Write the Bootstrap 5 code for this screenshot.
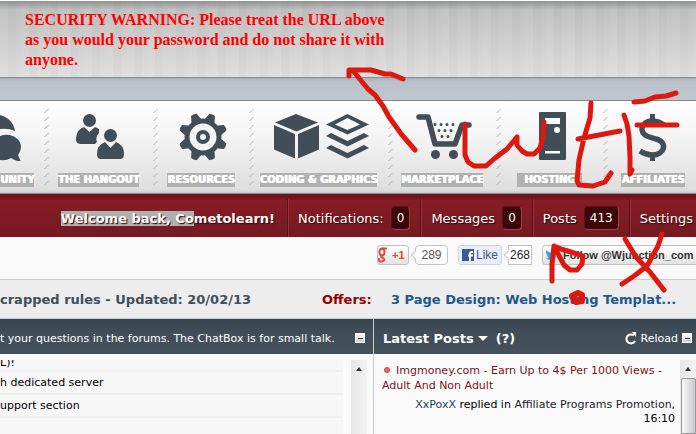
<!DOCTYPE html>
<html lang="en">
<head>
<meta charset="utf-8">
<meta name="viewport" content="width=device-width, initial-scale=1">
<title>Wjunction</title>
<link href="https://cdn.jsdelivr.net/npm/bootstrap@5.3.0/dist/css/bootstrap.min.css" rel="stylesheet">
<style>
body{font-family:"DejaVu Sans",Verdana,sans-serif;font-size:11px;line-height:15px;background:#fafafa;color:#000;overflow:hidden}
a{text-decoration:none;color:inherit}
.top-banner{border-top:1px solid #fff;border-bottom:1px solid #838d93;height:78px;padding:9px 25px;
 background:linear-gradient(rgba(110,114,114,.55),rgba(110,114,114,0) 9px),repeating-linear-gradient(90deg,rgba(255,255,255,.06) 0 8px,rgba(0,0,0,.01) 8px 16px,rgba(255,255,255,.03) 16px 21px),linear-gradient(#bbb,#dedede)}
.warn{font:bold 16px/20px "Liberation Serif","Times New Roman",serif;color:#f00;max-width:370px}
.blue-strip{height:23px;background:linear-gradient(#a9b2b9,#bac2ca 4px,#bfc6cd);border-bottom:1px solid #7b878f}
.icon-nav{display:grid;grid-template-columns:44px 109px 96px 139px 108px 107px minmax(100px,1fr);background:linear-gradient(#fff,#f4f4f4 40%,#dedede 96%,#cfcfcf);border-bottom:1px solid #838a8d;height:93px}
.nav-cell{display:flex;flex-direction:column;align-items:center;padding-top:10px;position:relative}
.nav-cell:first-child{align-items:flex-start}
.nav-cell:last-child{width:100px}
.slashes{position:absolute;left:0;top:8px}
.pic{height:50px;fill:#414d57}
.tag{margin-top:12px;height:14px;font-weight:bold;font-size:10px;line-height:14px;background:#b0b0b0;color:#fff;white-space:nowrap;text-shadow:1px 0 0 #fff}
.tag-wide{padding:0 7px}
.user-bar{height:43px;font-size:13px;color:#fff;text-shadow:1px 1px 1px #300;background:linear-gradient(#70131a 0 4px,#871c25 6px,#741a21);padding-top:5px;white-space:nowrap;overflow:hidden}
.user-bar>*{flex-shrink:0}
.welcome{width:287px;padding-right:12px}
.welcome mark{background:#b0b0b0;color:inherit;padding:0}
.bar-item{border-left:1px solid #5e1118;box-shadow:inset 1px 0 #962f37;padding:0 10px;gap:7px}
.count{background:#3d0609;border:1px solid #5e1016;border-right-color:#a0444b;border-bottom-color:#a0444b;border-radius:4px;min-width:19px;height:24px;padding:0 5px;line-height:22px;font-size:12px;text-align:center}
.share{height:42px;padding:8px 0 0 377px;white-space:nowrap;overflow:hidden;font-family:"Liberation Sans",Arial,sans-serif}
.share>*{flex-shrink:0}
.share button{height:20px;border:1px solid #c2c2c2;border-radius:3px;background:linear-gradient(#fff,#e2e2e2);padding:0}
.share .plus{width:32px;color:#dd4b39;font-weight:bold;font-size:11px;gap:4px}
.share .like{width:44px;background:#eceef5;border-color:#cad4e7;color:#3b5998;font-size:12px;gap:2px}
.bubble{height:20px;border:1px solid #c4c4c4;background:#fff;font-size:12px;line-height:18px;text-align:center;position:relative;color:#555;margin:0 10px 0 6px}
.bubble::before{content:"";position:absolute;left:-4px;top:6px;width:6px;height:6px;background:#fff;border:1px solid #c4c4c4;border-width:0 0 1px 1px;transform:rotate(45deg)}
.bubble-plus{width:33px}
.bubble-like{width:24px}
.share .follow{width:180px;font-weight:bold;font-size:11px;color:#333;gap:5px;padding-left:3px}
.news{height:40px;border-top:1px solid #ccc;border-bottom:1px solid #ccc;background:#ededed;font-weight:bold;font-size:13px;white-space:nowrap;overflow:hidden;color:#414f5d}
.news>*{flex-shrink:0}
.news-item{width:322px}
.offers{width:69px;color:#900}
.news a{color:#22588a}
.panels{display:grid;grid-template-columns:373px minmax(0,1fr);height:115px}
.pane-head{height:35px;background:linear-gradient(#38444d,#414e58 40%,#44515b);color:#fff;white-space:nowrap;overflow:hidden;padding-top:3px}
.pane-right{border-left:1px solid #ccc}
.pane-right .pane-head{padding-left:9px}
.post-title{font-size:13px}
.mini{width:10px;height:10px;flex-shrink:0;border:1px solid #fff;background:linear-gradient(#fff,#ccc);padding:0;display:flex;align-items:center;justify-content:center}
.mini::before{content:"";width:5px;height:1px;background:#333}
.chat-rows{width:343px;background:#f7f7f7;margin-top:6px;height:74px;overflow:hidden}
.chat-rows li{height:23px;border-bottom:2px solid #eee;line-height:22px;white-space:nowrap}
.chat-rows li:first-child{height:12px;display:flex;align-items:flex-end;overflow:hidden;line-height:15px}
.chat-rows li:last-child{border:0}
.rail{width:16px;margin-top:6px;height:74px;background:linear-gradient(90deg,#e6e6e6,#f2f2f2);display:flex;flex-direction:column;align-items:center}
.rail svg{margin-top:7px}
.thumb{width:15px;flex:1;margin-top:7px;border:1px solid #999;border-radius:2px 2px 0 0;background:linear-gradient(90deg,#fafafa,#c8c8cc)}
.post{padding:9px 5px 0 8px;width:308px}
.post .subj{color:#7b1320;white-space:nowrap}
.dot{display:inline-block;width:6px;height:6px;border-radius:50%;background:#e66;border:1px solid #e33;margin:0 6px 3px 2px;vertical-align:middle}
.post .meta{line-height:14px;text-align:right;margin-top:5px;padding-bottom:10px;border-bottom:1px solid #ccc;white-space:nowrap}
.who{color:#1f4063}
.ink{position:absolute;left:0;top:0;pointer-events:none;fill:none;stroke:#dd190f;stroke-width:5;stroke-linecap:round;stroke-linejoin:round}
</style>
<script src="https://cdn.jsdelivr.net/npm/bootstrap@5.3.0/dist/js/bootstrap.bundle.min.js"></script>
</head>
<body class="position-relative">
<header>
<div class="top-banner"><p class="warn mb-0">SECURITY WARNING: Please treat the URL above as you would your password and do not share it with anyone.</p></div>
<div class="blue-strip"></div>
<svg width="0" height="0" class="position-absolute"><defs>
<pattern id="hatch" width="6" height="8" patternUnits="userSpaceOnUse"><path d="M.5 4L4.500 0" stroke="#b2b2b2" fill="none"/></pattern></defs></svg>
<nav class="icon-nav">
<a href="#" class="nav-cell"><svg class="pic" width="24" viewBox="0 111 24 50"><path d="M0 115C8 117 14 123 15 131Q8 128 0 129zM0 136C10 132 21 138 21 147Q21 151 18 155L21 162Q16 161 11 158Q6 161 0 160z"/></svg><span class="tag">UNITY</span></a>
<a href="#" class="nav-cell"><svg class="slashes" width="6" height="76"><rect width="6" height="76" fill="url(#hatch)"/></svg><svg class="pic" width="57" viewBox="70 111 57 50"><circle cx="89.500" cy="120.500" r="6.500"/><path d="M84 127l5.500 5 5.500-5q2 1 4 2v4q-4 4-2 9l-2 2H80q-5-1-4-6 1-9 8-11z"/><circle cx="110.500" cy="135.500" r="6.500"/><path d="M105 142l5.500 6 5.500-6q8 3 8 12 0 5-4 5h-19q-4 0-4-5 0-9 8-12z"/></svg><span class="tag">THE HANGOUT</span></a>
<a href="#" class="nav-cell"><svg class="slashes" width="6" height="76"><rect width="6" height="76" fill="url(#hatch)"/></svg><svg class="pic" width="56" viewBox="173 111 56 50"><g transform="translate(203 137)"><path d="M-5-18L-3-24Q0-25 3-24L5-18V18L3 24Q0 25-3 24L-5 18z" transform="rotate(22.500)"/><path d="M-5-18L-3-24Q0-25 3-24L5-18V18L3 24Q0 25-3 24L-5 18z" transform="rotate(67.500)"/><path d="M-5-18L-3-24Q0-25 3-24L5-18V18L3 24Q0 25-3 24L-5 18z" transform="rotate(112.500)"/><path d="M-5-18L-3-24Q0-25 3-24L5-18V18L3 24Q0 25-3 24L-5 18z" transform="rotate(157.500)"/><circle r="18.500"/><circle r="13.500" fill="#f4f4f4"/><circle r="7"/><circle r="3" fill="#f4f4f4"/></g></svg><span class="tag">RESOURCES</span></a>
<a href="#" class="nav-cell"><svg class="slashes" width="6" height="76"><rect width="6" height="76" fill="url(#hatch)"/></svg><svg class="pic" width="109" viewBox="264 111 109 50"><path d="M296 114l22 8.500-21.500 9L275 122.500zM274 125l21 9v24.500l-21-9zM298 134l21-9v24.500l-21 9z"/><path fill-rule="evenodd" d="M347.500 114L369 124.500l-21.500 10-21.500-10zM347.500 118L335 124.500l12.500 5.500 12.500-5.500z"/><path d="M326 136l5-3 16.500 8 16.500-8 5 3-21.500 10.500zM326 148l5-3 16.500 8 16.500-8 5 3-21.500 10.500z"/></svg><span class="tag">CODING &amp; GRAPHICS</span></a>
<a href="#" class="nav-cell"><svg class="slashes" width="6" height="76"><rect width="6" height="76" fill="url(#hatch)"/></svg><svg class="pic" width="60" viewBox="412 111 60 50"><path d="M419 117h9l7 27h20l7-19h7" fill="none" stroke="#414d57" stroke-width="5.500" stroke-linecap="round" stroke-linejoin="round"/><circle cx="435.500" cy="154.500" r="4.500"/><circle cx="453.500" cy="154.500" r="4.500"/><path d="M435 124.500h20M439 130.500h14M442 136.500h8" fill="none" stroke="#414d57" stroke-width="3" stroke-dasharray="0 6" stroke-linecap="round"/></svg><span class="tag">MARKETPLACE</span></a>
<a href="#" class="nav-cell"><svg class="slashes" width="6" height="76"><rect width="6" height="76" fill="url(#hatch)"/></svg><svg class="pic" width="37" viewBox="531 111 37 50"><rect x="539" y="112" width="27" height="48" rx="1"/><path d="M545 118h15v6h-15zM545 151h15v2.500h-15z" fill="#fff"/><circle cx="557" cy="130" r="3" fill="#fff"/></svg><span class="tag tag-wide">HOSTING</span></a>
<a href="#" class="nav-cell"><svg class="slashes" width="6" height="76"><rect width="6" height="76" fill="url(#hatch)"/></svg><svg class="pic" width="40" viewBox="633 111 40 50"><path d="M664 125Q658 121 652 121C641 121 638 133 648 136.500L656 139C668 142 665 155 652 155Q646 155 640 151" fill="none" stroke="#414d57" stroke-width="5.500"/><path d="M650 114h5v8h-5zM650 154h5v8h-5z"/></svg><span class="tag">AFFILIATES</span></a>
</nav>
<div class="user-bar d-flex">
<div class="welcome d-flex align-items-center justify-content-end fw-bold"><span><mark>Welcome back, Co</mark>metolearn!</span></div>
<a href="#" class="bar-item d-flex align-items-center">Notifications: <span class="count">0</span></a>
<a href="#" class="bar-item d-flex align-items-center">Messages <span class="count">0</span></a>
<a href="#" class="bar-item d-flex align-items-center">Posts <span class="count">413</span></a>
<a href="#" class="bar-item d-flex align-items-center">Settings</a>
</div>
</header>
<main>
<div class="share d-flex">
<button class="plus d-flex align-items-center" aria-label="Plus one"><svg width="10" height="16" fill="none" stroke="#dd4b39" stroke-width="2"><ellipse cx="4" cy="5" rx="2.500" ry="3.500"/><path d="M4 1.500h5M5 8q-4 2 0 3 3 2 0 3Q0 16 1 11"/></svg>+1</button>
<span class="bubble bubble-plus rounded-1">289</span>
<button class="like d-flex align-items-center justify-content-center"><svg width="12" height="12"><rect width="12" height="12" fill="#3b5998"/><path d="M11 3H9.500Q8 3 8 5v7M6 6.500h5" stroke="#fff" stroke-width="2" fill="none"/></svg>Like</button>
<span class="bubble bubble-like text-dark">268</span>
<button class="follow d-flex align-items-center"><svg width="12" height="12"><path d="M0 1q3 3 6 3 0-4 4-3l2 0-1 2q0 8-7 8Q1 11 0 9h3Q1 8 1 6L0 4z" fill="#2ba9e1"/></svg>Follow @Wjunction_com</button>
</div>
<div class="news d-flex align-items-center"><span class="news-item">crapped rules - Updated: 20/02/13</span><span class="offers">Offers:</span><a href="#">3 Page Design: Web Hosting Templat...</a></div>
<div class="panels">
<section>
<div class="pane-head d-flex align-items-center"><span>t your questions in the forums. The ChatBox is for small talk.</span><button class="mini ms-auto me-2" aria-label="Collapse chat"></button></div>
<div class="d-flex"><ul class="chat-rows list-unstyled mb-0"><li>L)!</li><li>h dedicated server</li><li>upport section</li><li></li></ul><div class="rail ms-2"><svg width="6" height="4"><path d="M0 4l3-4 3 4z" fill="#333"/></svg></div></div>
</section>
<section class="pane-right">
<div class="pane-head d-flex align-items-center"><b class="post-title">Latest Posts</b><svg class="mx-1" width="10" height="5"><path d="M0 0h10L5 5z" fill="#fff"/></svg><b class="post-title ms-1">(?)</b>
<a href="#" class="ms-auto d-flex align-items-center gap-1"><svg width="12" height="13" fill="none" stroke="#fff" stroke-width="2"><path d="M9 3Q3 1 1.500 6 1 11 6 11.500 9 11 10 9"/><path d="M7 0h4v5z" fill="#fff" stroke="none"/></svg>Reload</a><button class="mini ms-1 me-1" aria-label="Collapse posts"></button></div>
<div class="d-flex"><div class="post"><a href="#" class="subj d-block"><span class="dot"></span>Imgmoney.com - Earn Up to 4$ Per 1000 Views -<br>Adult And Non Adult</a><div class="meta"><a href="#" class="who">XxPoxX</a> replied in <a href="#" class="text-body">Affiliate Programs Promotion</a>,<br>16:10</div></div><div class="rail"><svg width="6" height="4"><path d="M0 4l3-4 3 4z" fill="#333"/></svg><div class="thumb"></div></div></div>
</section>
</div>
</main>
<svg class="ink" width="696" height="434" aria-hidden="true"><path d="M415 150L402 135 389 117 383 106 375 95 368 89 354 72M349 76V70H371L385 74H391L403 79M465 124V155L468 162 474 166H486L495 158 507 149 517 137V145L522 151 527 154H534L540 148 543 136 544 122M591 103L590 118 584 138 579 160 577 181 579 185 593 186 605 182 611 173M578 139L599 135 620 131M624 115L627 124 629 136 630 158V174L632 170M634 102L645 101 655 97 666 96 676 93M637 125H677M552 281V264L554 246 561 249 574 253 583 256 582 264 577 270H570L564 265 555 248M625 239L636 257 650 272 664 290M662 234L658 246 647 266 634 276 622 284"/><path d="M572 296l6-3 4 2v6l-6 1z" stroke-width="6"/></svg>
</body>
</html>
